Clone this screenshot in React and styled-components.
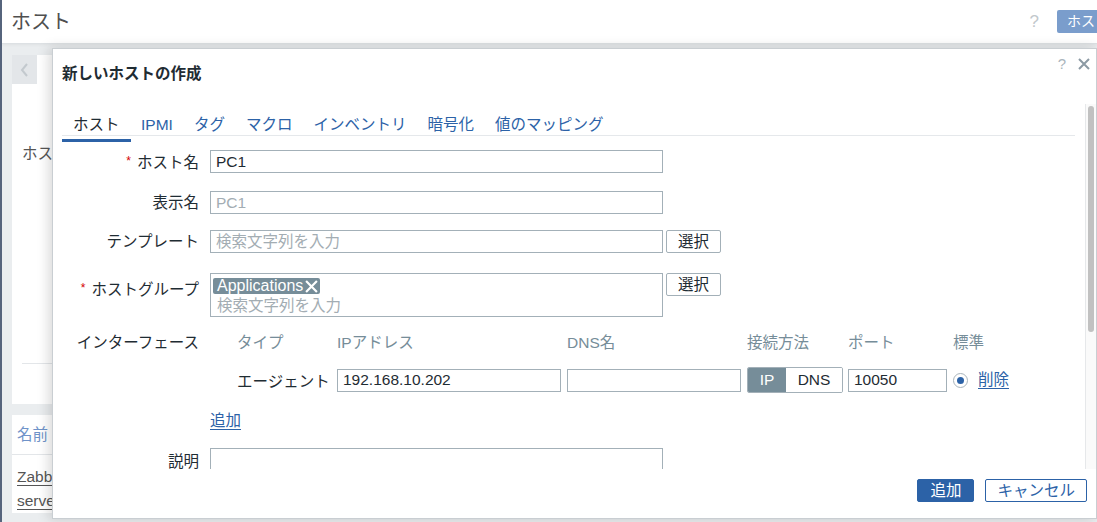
import React from 'react';
import styled, { createGlobalStyle } from 'styled-components';

const GlobalStyle = createGlobalStyle`
  html, body { margin: 0; padding: 0; }
  body {
    font-family: "Liberation Sans", "Noto Sans CJK JP", sans-serif;
    background: #ffffff;
    color: #1f2c33;
  }
  * { box-sizing: border-box; }
`;

const FONT = 15.5;
const BLUE = '#2c62a7';
const GRAY = '#768d99';
const BORDER = '#a3b0b8';

/* ---------- background page ---------- */
const Page = styled.div`
  position: relative;
  width: 1097px;
  height: 522px;
  overflow: hidden;
  background: #eaedef;
  border-left: 2px solid #56647c;
`;

const PageHeader = styled.header`
  height: 44px;
  background: #ffffff;
  display: flex;
  align-items: center;
  padding-left: 9px;
  border-bottom: 1px solid #dde1e4;
  box-shadow: 0 1px 3px rgba(0, 0, 0, 0.05);
`;

const PageTitle = styled.h1`
  margin: 0;
  font-size: 20px;
  font-weight: 400;
  color: #4f4f4f;
  line-height: 24px;
`;

const HeaderTools = styled.div`
  margin-left: auto;
  display: flex;
  align-items: center;
  gap: 18px;
`;

const HelpMark = styled.span`
  color: #c2c8cc;
  font-size: 17px;
`;

const HeaderButton = styled.div`
  height: 23px;
  width: 40px;
  padding-left: 10px;
  background: #7a9dcc;
  color: #ffffff;
  border-radius: 2px 0 0 2px;
  font-size: 14px;
  line-height: 23px;
  white-space: nowrap;
  overflow: hidden;
`;

const PageContent = styled.div`
  padding: 11px 0 0 10px;
`;

const BgTabs = styled.div`
  display: flex;
  height: 29px;
`;

const BgPrevTab = styled.div`
  width: 25px;
  background: #e3e6e9;
  display: flex;
  align-items: center;
  justify-content: center;
`;

const BgActiveTab = styled.div`
  width: 120px;
  background: #ffffff;
`;

const BgPanel = styled.div`
  background: #ffffff;
  height: ${p => p.$h}px;
  margin-top: ${p => p.$mt || 0}px;
  padding: ${p => p.$pad || '0'};
  border-bottom: ${p => (p.$line ? '1px solid #e3e6e9' : 'none')};
`;

const BgText = styled.div`
  font-size: ${FONT}px;
  color: ${p => p.$color || '#555'};
  line-height: 24px;
  text-decoration: ${p => (p.$u ? 'underline' : 'none')};
  text-underline-offset: 3px;
`;

const BgDivider = styled.div`
  height: 1px;
  background: #e3e6e9;
  margin-top: ${p => p.$mt}px;
`;

/* ---------- modal ---------- */
const Modal = styled.div`
  position: absolute;
  left: 50px;
  top: 48px;
  width: 1045px;
  height: 471px;
  background: #ffffff;
  border: 1px solid #c9ced2;
  box-shadow: -3px 0 12px rgba(0, 0, 0, 0.16);
  display: flex;
  flex-direction: column;
`;

const ModalHead = styled.div`
  height: 49px;
  flex: none;
  display: flex;
  align-items: flex-start;
  padding: 15px 6px 0 9px;
`;

const ModalTitle = styled.h2`
  margin: 0;
  font-size: ${FONT}px;
  font-weight: 700;
  line-height: 20px;
  color: #1f2c33;
`;

const ModalTools = styled.div`
  margin-left: auto;
  margin-top: -9px;
  display: flex;
  align-items: center;
  gap: 12px;
`;

const ToolHelp = styled.span`
  color: #aab5bc;
  font-size: 15px;
`;

const ModalBody = styled.div`
  flex: 1;
  display: flex;
  overflow: hidden;
`;

const BodyContent = styled.div`
  flex: 1;
  padding: 17px 10px 0 9px;
`;

const ScrollTrack = styled.div`
  width: 11px;
  margin-top: 6px;
  border-left: 1px solid #e6e8ea;
  background: #fafafa;
  padding: 2px 0 0 2px;
`;

const ScrollThumb = styled.div`
  width: 6px;
  height: 226px;
  border-radius: 3px;
  background: #c1c1c1;
`;

const TabBar = styled.div`
  display: flex;
  border-bottom: 1px solid #e5e8eb;
`;

const Tab = styled.div`
  position: relative;
  padding: 0 ${p => (p.$first ? 11 : 10.5)}px;
  font-size: ${FONT}px;
  line-height: 20px;
  color: ${p => (p.$active ? '#1f2c33' : BLUE)};
  white-space: nowrap;
  &::after {
    content: '';
    display: ${p => (p.$active ? 'block' : 'none')};
    position: absolute;
    left: 0;
    right: 0;
    bottom: -7px;
    height: 3px;
    background: ${BLUE};
  }
`;

const FormRow = styled.div`
  display: grid;
  grid-template-columns: 137px 1fr;
  column-gap: 11px;
  margin-top: ${p => p.$mt}px;
  align-items: ${p => p.$align || 'center'};
`;

const Label = styled.div`
  text-align: right;
  font-size: ${FONT}px;
  line-height: ${p => p.$lh || 20}px;
  color: #1f2c33;
  white-space: nowrap;
  padding-top: ${p => p.$pt || 0}px;
`;

const Req = styled.span`
  color: #d40000;
  font-size: 12px;
  vertical-align: 3px;
  margin-right: 6px;
`;

const Field = styled.div`
  display: flex;
  align-items: flex-start;
  gap: 3px;
`;

const TextInput = styled.input`
  width: ${p => p.$w || 453}px;
  height: 23px;
  border: 1px solid ${BORDER};
  border-radius: 0;
  padding: 0 5px;
  font-family: inherit;
  font-size: ${FONT}px;
  color: #1f2c33;
  background: #ffffff;
  outline: none;
  &::placeholder { color: #a3adb3; }
`;

const TextArea = styled.div`
  width: 453px;
  height: 60px;
  border: 1px solid ${BORDER};
`;

const SelectButton = styled.button`
  height: 23px;
  padding: 0 11px;
  border: 1px solid ${BORDER};
  border-radius: 2px;
  background: #ffffff;
  font-family: inherit;
  font-size: ${FONT}px;
  color: #1f2c33;
  line-height: 21px;
`;

const MultiSelect = styled.div`
  width: 453px;
  height: 44px;
  border: 1px solid ${BORDER};
  padding: 3px 2px 0 2px;
`;

const Chip = styled.span`
  display: inline-flex;
  align-items: center;
  gap: 2px;
  height: 16px;
  padding: 0 2px 0 4px;
  background: ${GRAY};
  color: #ffffff;
  border-radius: 2px;
  font-size: 16px;
  line-height: 16px;
`;

const Placeholder = styled.div`
  padding-left: 4px;
  font-size: ${FONT}px;
  line-height: 22px;
  color: #a3adb3;
`;

const IfaceGrid = styled.div`
  display: grid;
  grid-template-columns: 27px 100px 230px 180px 101px 105px auto;
  align-items: center;
  row-gap: 14px;
`;

const ColHead = styled.div`
  grid-column: ${p => p.$col};
  font-size: ${FONT}px;
  line-height: 20px;
  color: ${GRAY};
  white-space: nowrap;
`;

const Cell = styled.div`
  grid-column: ${p => p.$col};
  display: flex;
  align-items: center;
  font-size: ${FONT}px;
  color: #1f2c33;
  white-space: nowrap;
`;

const Toggle = styled.div`
  display: inline-flex;
  height: 26px;
  border: 1px solid ${BORDER};
  border-radius: 2px;
  overflow: hidden;
`;

const ToggleOpt = styled.span`
  width: ${p => p.$w}px;
  display: flex;
  align-items: center;
  justify-content: center;
  font-size: ${FONT}px;
  background: ${p => (p.$on ? GRAY : '#ffffff')};
  color: ${p => (p.$on ? '#ffffff' : '#1f2c33')};
`;

const Radio = styled.span`
  width: 15px;
  height: 15px;
  border: 1px solid #a9b4bb;
  border-radius: 50%;
  display: inline-flex;
  align-items: center;
  justify-content: center;
  margin-right: 10px;
  &::after {
    content: '';
    width: 7px;
    height: 7px;
    border-radius: 50%;
    background: ${BLUE};
  }
`;

const Link = styled.a`
  color: ${BLUE};
  font-size: ${FONT}px;
  line-height: 20px;
  text-decoration: underline;
  text-underline-offset: 3px;
  cursor: pointer;
`;

const ModalFoot = styled.div`
  height: 49px;
  flex: none;
  display: flex;
  justify-content: flex-end;
  align-items: flex-start;
  gap: 11px;
  padding: 10px 9px 0 0;
`;

const FootButton = styled.button`
  height: 23px;
  padding: 0 ${p => (p.$primary ? 12 : 11)}px;
  border: 1px solid ${BLUE};
  border-radius: 2px;
  background: ${p => (p.$primary ? BLUE : '#ffffff')};
  color: ${p => (p.$primary ? '#ffffff' : BLUE)};
  font-family: inherit;
  font-size: ${FONT}px;
  line-height: 21px;
`;

const CloseIcon = ({ size = 12, color = '#8c9aa4', w = 2 }) => (
  <svg width={size} height={size} viewBox="0 0 12 12">
    <path d="M1 1 L11 11 M11 1 L1 11" stroke={color} strokeWidth={w} strokeLinecap="butt" />
  </svg>
);

const ChevronLeft = () => (
  <svg width="9" height="14" viewBox="0 0 9 14">
    <path d="M7 1 L2 7 L7 13" stroke="#c3c9ce" strokeWidth="2" fill="none" />
  </svg>
);

const tabs = ['ホスト', 'IPMI', 'タグ', 'マクロ', 'インベントリ', '暗号化', '値のマッピング'];

export default function App() {
  return (
    <>
      <GlobalStyle />
      <Page>
        <PageHeader>
          <PageTitle>ホスト</PageTitle>
          <HeaderTools>
            <HelpMark>?</HelpMark>
            <HeaderButton>ホス</HeaderButton>
          </HeaderTools>
        </PageHeader>
        <PageContent>
          <BgTabs>
            <BgPrevTab><ChevronLeft /></BgPrevTab>
            <BgActiveTab />
          </BgTabs>
          <BgPanel $h={320} $pad="58px 10px 0 10px">
            <BgText>ホスト</BgText>
            <BgDivider $mt={197} />
          </BgPanel>
          <BgPanel $h={40} $mt={11} $pad="8px 5px 0 5px" $line>
            <BgText $color="#6f93c9">名前</BgText>
          </BgPanel>
          <BgPanel $h={58} $pad="10px 5px 0 5px">
            <BgText $u>Zabbix</BgText>
            <BgText $u>server</BgText>
          </BgPanel>
        </PageContent>

        <Modal>
          <ModalHead>
            <ModalTitle>新しいホストの作成</ModalTitle>
            <ModalTools>
              <ToolHelp>?</ToolHelp>
              <CloseIcon />
            </ModalTools>
          </ModalHead>

          <ModalBody>
            <BodyContent>
              <TabBar>
                {tabs.map((t, i) => (
                  <Tab key={t} $active={i === 0} $first={i === 0}>{t}</Tab>
                ))}
              </TabBar>

              <FormRow $mt={14}>
                <Label><Req>*</Req>ホスト名</Label>
                <Field><TextInput readOnly defaultValue="PC1" /></Field>
              </FormRow>

              <FormRow $mt={18}>
                <Label>表示名</Label>
                <Field><TextInput readOnly placeholder="PC1" /></Field>
              </FormRow>

              <FormRow $mt={16}>
                <Label>テンプレート</Label>
                <Field>
                  <TextInput readOnly placeholder="検索文字列を入力" />
                  <SelectButton>選択</SelectButton>
                </Field>
              </FormRow>

              <FormRow $mt={20} $align="start">
                <Label $pt={5}><Req>*</Req>ホストグループ</Label>
                <Field>
                  <MultiSelect>
                    <Chip>Applications<CloseIcon size={13} color="#ffffff" w={2} /></Chip>
                    <Placeholder>検索文字列を入力</Placeholder>
                  </MultiSelect>
                  <SelectButton>選択</SelectButton>
                </Field>
              </FormRow>

              <FormRow $mt={16} $align="start">
                <Label>インターフェース</Label>
                <IfaceGrid>
                  <ColHead $col={2}>タイプ</ColHead>
                  <ColHead $col={3}>IPアドレス</ColHead>
                  <ColHead $col={4}>DNS名</ColHead>
                  <ColHead $col={5}>接続方法</ColHead>
                  <ColHead $col={6}>ポート</ColHead>
                  <ColHead $col={7}>標準</ColHead>

                  <Cell $col={2}>エージェント</Cell>
                  <Cell $col={3}><TextInput $w={224} readOnly defaultValue="192.168.10.202" /></Cell>
                  <Cell $col={4}><TextInput $w={174} readOnly defaultValue="" /></Cell>
                  <Cell $col={5}>
                    <Toggle>
                      <ToggleOpt $on $w={38}>IP</ToggleOpt>
                      <ToggleOpt $w={56}>DNS</ToggleOpt>
                    </Toggle>
                  </Cell>
                  <Cell $col={6}><TextInput $w={99} readOnly defaultValue="10050" /></Cell>
                  <Cell $col={7}><Radio /><Link>削除</Link></Cell>
                </IfaceGrid>
              </FormRow>

              <FormRow $mt={18}>
                <Label />
                <div><Link>追加</Link></div>
              </FormRow>

              <FormRow $mt={17} $align="start">
                <Label $pt={6} $lh={16}>説明</Label>
                <Field><TextArea /></Field>
              </FormRow>
            </BodyContent>
            <ScrollTrack>
              <ScrollThumb />
            </ScrollTrack>
          </ModalBody>

          <ModalFoot>
            <FootButton $primary>追加</FootButton>
            <FootButton>キャンセル</FootButton>
          </ModalFoot>
        </Modal>
      </Page>
    </>
  );
}
